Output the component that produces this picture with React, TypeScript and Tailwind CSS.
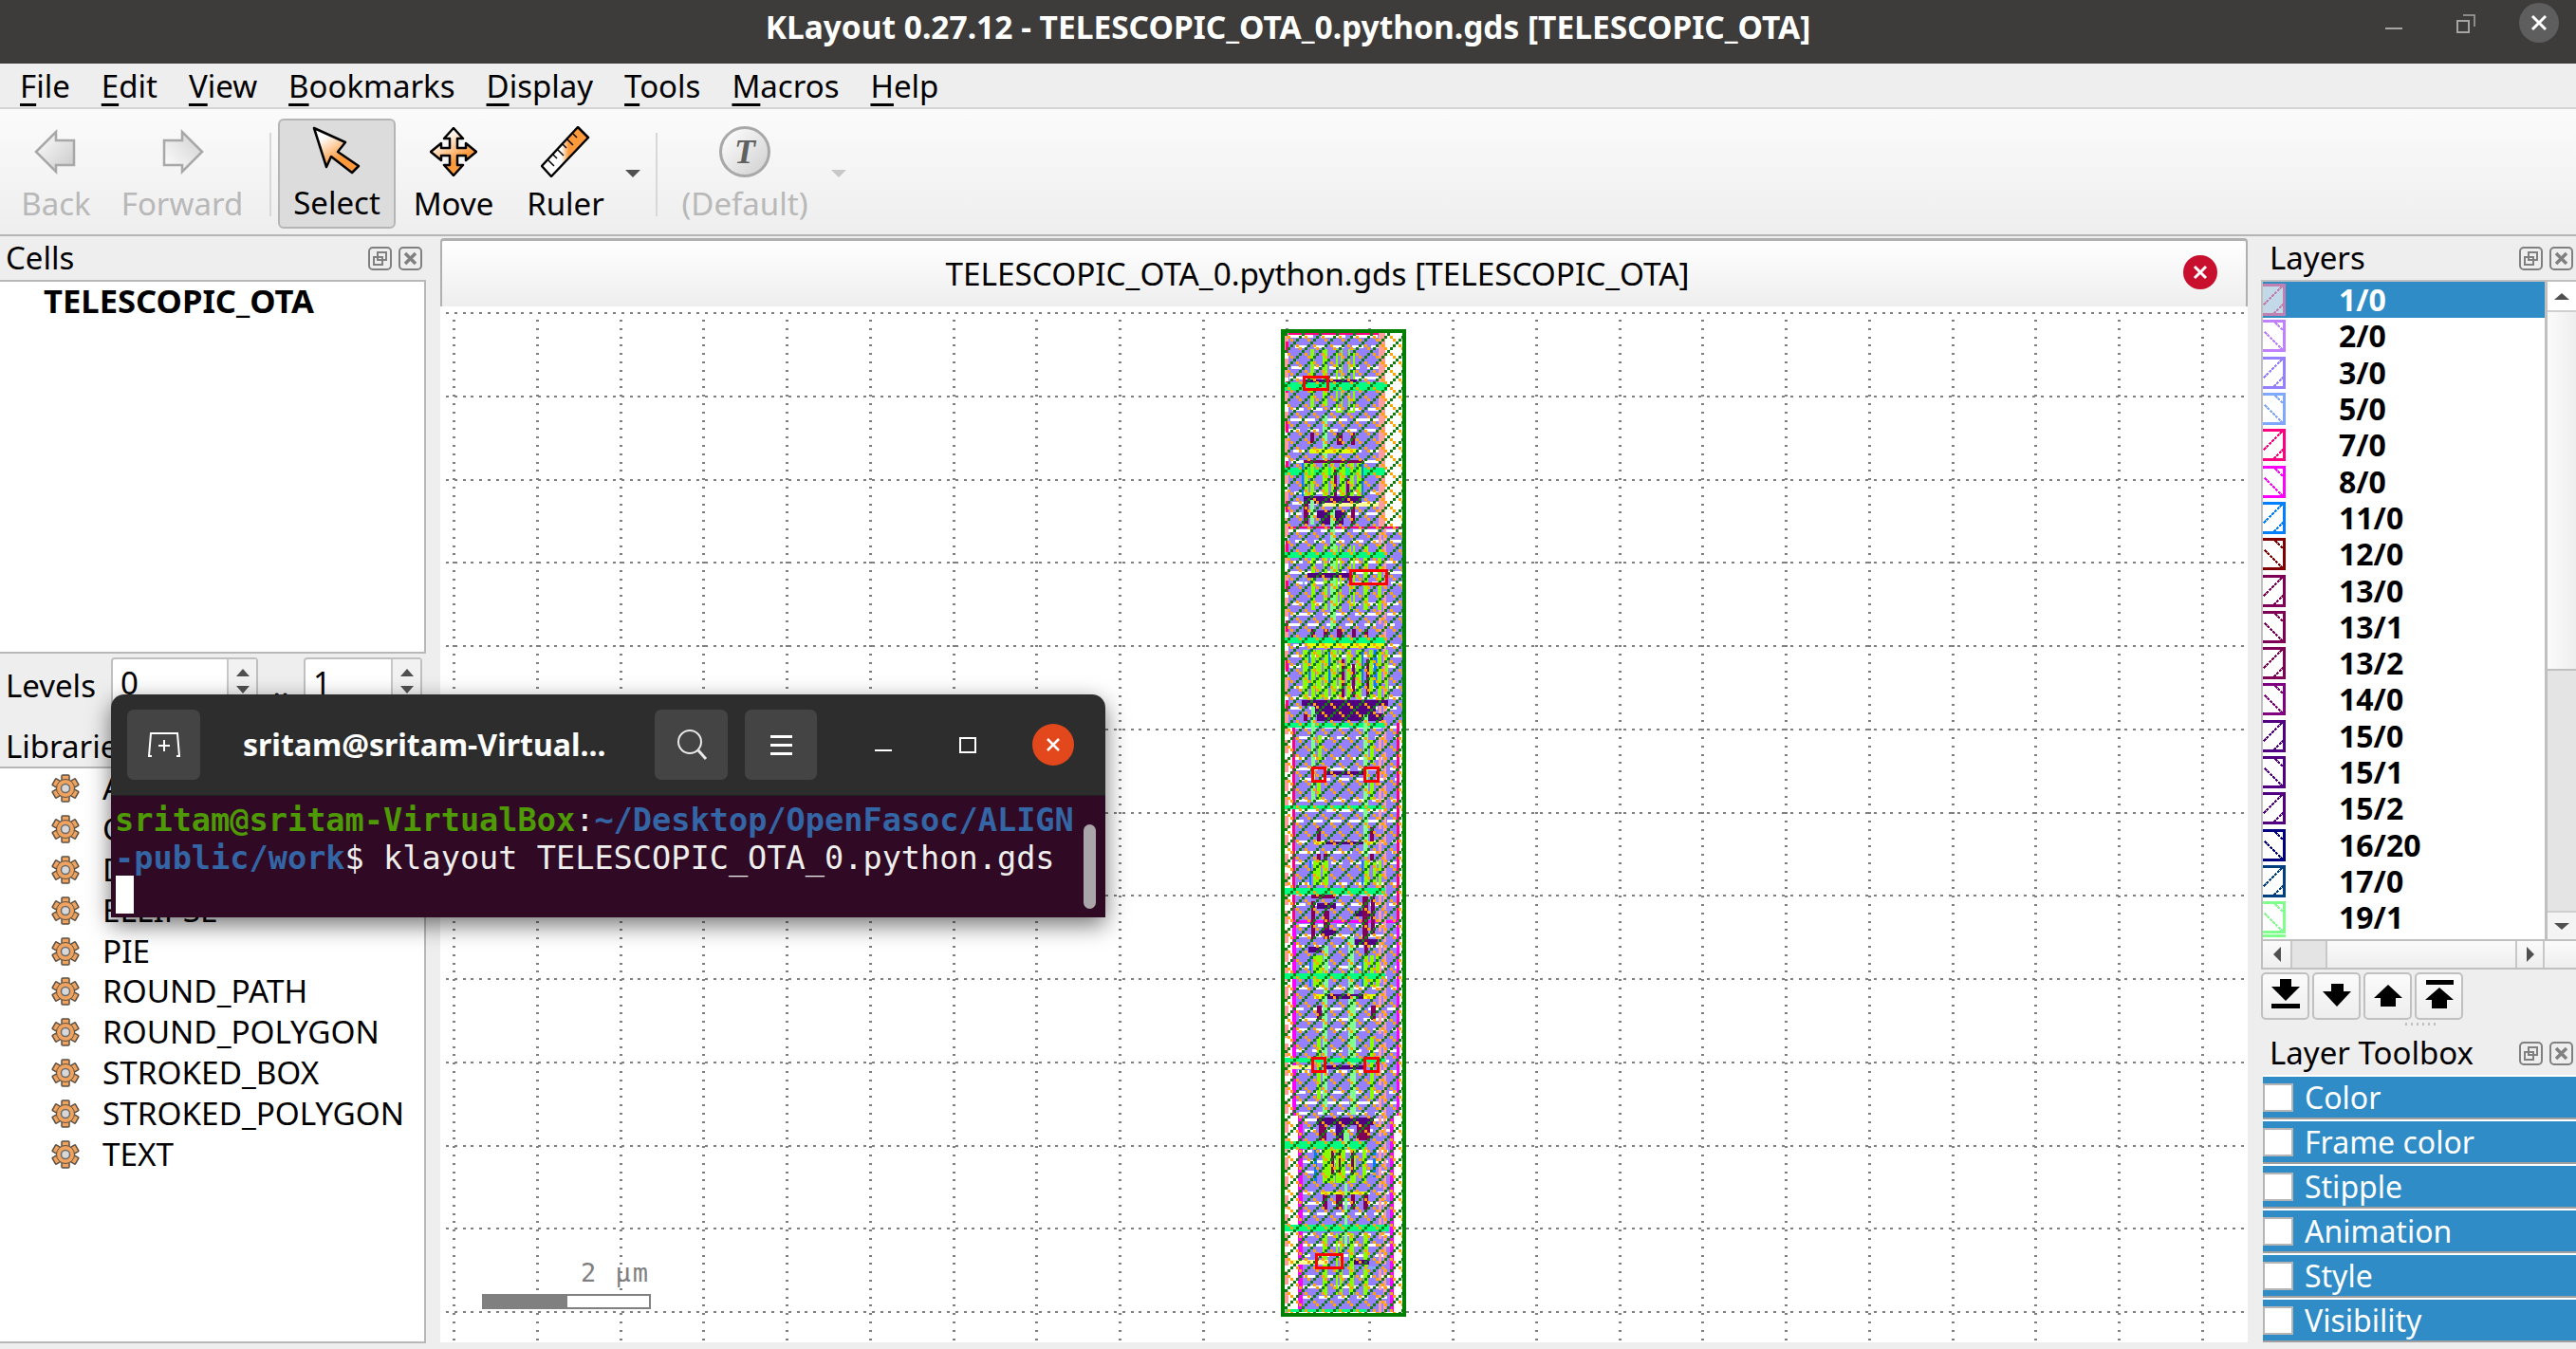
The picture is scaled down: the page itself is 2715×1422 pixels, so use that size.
const menus = [
  ["F", "ile"],
  ["E", "dit"],
  ["V", "iew"],
  ["B", "ookmarks"],
  ["D", "isplay"],
  ["T", "ools"],
  ["M", "acros"],
  ["H", "elp"],
];

const libs = ["ARC", "CIRCLE", "DONUT", "ELLIPSE", "PIE", "ROUND_PATH", "ROUND_POLYGON", "STROKED_BOX", "STROKED_POLYGON", "TEXT"];

const layers: [string, string][] = [
  ["1/0", "#c080b0"],
  ["2/0", "#c080ff"],
  ["3/0", "#9580ff"],
  ["5/0", "#80a8ff"],
  ["7/0", "#ff0080"],
  ["8/0", "#ff00ff"],
  ["11/0", "#0080ff"],
  ["12/0", "#800000"],
  ["13/0", "#800057"],
  ["13/1", "#800057"],
  ["13/2", "#800057"],
  ["14/0", "#800080"],
  ["15/0", "#500080"],
  ["15/1", "#500080"],
  ["15/2", "#500080"],
  ["16/20", "#000080"],
  ["17/0", "#004080"],
  ["19/1", "#80ff8d"],
];

const toolbox = ["Color", "Frame color", "Stipple", "Animation", "Style", "Visibility"];

// drawing colours from the klayout palette
const LIME = "#88ff00";
const MINT = "#80ff8d";
const BAR = "#00ff80";
const DP = "#500080";
const DR = "#800057";
const YEL = "#e0ff00";
const PALE = "#ffff99";
const BLUE = "#0080ff";

const shapes: [number, number, number, number, string][] = [
  // top device
  [1381, 368, 4, 62, LIME], [1394, 368, 5, 60, LIME], [1408, 368, 2, 67, LIME], [1413, 368, 2, 67, LIME], [1408, 433, 7, 2, LIME], [1421, 368, 2, 67, LIME], [1426, 368, 2, 67, LIME], [1421, 433, 7, 2, LIME],
  [1375, 400, 55, 4, DP], [1352, 403, 110, 9, BAR], [1394, 437, 5, 66, MINT],
  [1381, 456, 4, 11, DR], [1409, 456, 6, 13, DR], [1424, 456, 4, 13, DR],
  [1380, 473, 50, 5, YEL], [1374, 485, 63, 3, DR], [1352, 493, 108, 8, BAR],
  [1375, 488, 4, 35, LIME], [1381, 488, 4, 35, LIME], [1394, 488, 6, 35, LIME], [1403, 488, 3, 35, LIME], [1412, 488, 6, 35, LIME], [1423, 488, 4, 35, LIME], [1430, 488, 5, 35, LIME],
  [1372, 488, 2, 35, BLUE], [1435, 488, 2, 35, BLUE], [1406, 495, 3, 28, DR], [1419, 505, 3, 18, DR],
  [1374, 523, 61, 8, DP], [1374, 531, 5, 22, DR], [1388, 538, 30, 8, DP], [1392, 546, 24, 7, DP], [1424, 531, 4, 22, DR], [1381, 527, 4, 26, MINT], [1394, 530, 59, 4, PALE],
  [1358, 555, 122, 2, "#ff0080"],
  // second device
  [1402, 537, 5, 36, MINT],
  [1382, 575, 4, 68, LIME], [1395, 575, 4, 68, LIME], [1408, 575, 2, 68, LIME], [1412, 575, 2, 68, LIME], [1422, 575, 2, 68, LIME], [1426, 575, 2, 68, LIME], [1437, 575, 5, 68, LIME], [1452, 575, 4, 68, LIME],
  [1402, 573, 6, 90, MINT], [1353, 582, 107, 6, BAR], [1378, 604, 45, 5, DP], [1373, 604, 2, 12, "#80a8ff"],
  [1382, 663, 4, 9, DR], [1395, 663, 5, 9, DR], [1409, 663, 6, 9, DR], [1425, 663, 4, 9, DR], [1438, 663, 4, 9, DR],
  [1378, 672, 66, 5, DP], [1353, 672, 107, 6, BAR], [1378, 678, 82, 5, YEL],
  [1373, 685, 6, 52, LIME], [1382, 685, 4, 52, LIME], [1387, 685, 6, 52, LIME], [1395, 685, 5, 52, LIME], [1403, 685, 6, 52, LIME], [1411, 685, 3, 52, LIME], [1419, 685, 5, 52, LIME], [1429, 685, 6, 52, LIME], [1443, 685, 4, 52, LIME], [1452, 685, 4, 52, LIME], [1460, 685, 3, 52, LIME],
  [1379, 685, 2, 40, BLUE], [1400, 685, 2, 40, BLUE], [1435, 685, 2, 40, BLUE], [1448, 685, 3, 40, BLUE], [1414, 695, 3, 40, DR], [1425, 700, 3, 35, DR], [1440, 695, 3, 40, DR],
  [1372, 738, 91, 6, DP], [1385, 744, 65, 8, DP], [1374, 752, 4, 8, DR], [1388, 752, 70, 8, DP], [1353, 762, 107, 5, BAR],
  [1382, 745, 4, 100, MINT], [1437, 753, 5, 150, MINT], [1389, 775, 4, 30, LIME], [1444, 780, 4, 25, LIME],
  // middle devices
  [1398, 813, 39, 4, DP], [1388, 825, 4, 18, LIME], [1444, 825, 4, 18, LIME],
  [1353, 849, 107, 4, BAR], [1388, 872, 4, 15, DR], [1444, 872, 4, 15, DR], [1385, 887, 12, 3, YEL], [1397, 887, 40, 3, DP], [1440, 887, 11, 3, YEL],
  [1388, 900, 4, 7, DR], [1395, 900, 4, 7, DR], [1444, 900, 4, 7, DR],
  [1380, 907, 2, 26, BLUE], [1384, 907, 4, 26, LIME], [1388, 907, 4, 26, LIME], [1394, 907, 6, 26, LIME], [1435, 907, 2, 26, BLUE], [1438, 907, 5, 26, LIME], [1447, 907, 4, 26, LIME], [1453, 907, 3, 26, LIME],
  [1353, 936, 107, 7, BAR],
  [1382, 943, 25, 4, DR], [1382, 950, 4, 40, DR], [1388, 952, 20, 6, DP], [1395, 960, 6, 30, DR], [1428, 960, 16, 6, DP], [1436, 945, 6, 50, DR], [1445, 945, 4, 40, DR],
  [1392, 980, 16, 6, DP], [1379, 998, 14, 6, DP], [1428, 990, 24, 6, DP], [1438, 985, 4, 30, DR],
  [1380, 1007, 2, 33, BLUE], [1384, 1007, 6, 33, LIME], [1390, 1007, 4, 33, LIME], [1396, 1007, 4, 33, LIME], [1437, 1007, 5, 33, LIME], [1444, 1007, 4, 33, LIME], [1450, 1007, 4, 33, LIME], [1435, 1007, 2, 33, BLUE],
  [1395, 997, 5, 53, MINT], [1421, 988, 6, 125, MINT], [1353, 1026, 107, 6, BAR],
  [1385, 1048, 65, 5, DP], [1385, 1048, 12, 5, YEL], [1437, 1048, 13, 5, YEL],
  [1388, 1060, 5, 15, DR], [1445, 1060, 5, 15, DR],
  [1394, 1050, 5, 125, MINT], [1423, 1050, 6, 125, MINT], [1388, 1093, 4, 66, LIME], [1444, 1093, 4, 66, LIME],
  [1353, 1115, 107, 5, BAR], [1358, 1123, 24, 4, PALE], [1398, 1123, 40, 4, DP],
  // lower devices
  [1388, 1178, 60, 8, DP], [1390, 1186, 8, 16, DR], [1408, 1186, 8, 16, DP], [1430, 1186, 14, 16, DR], [1353, 1203, 87, 8, BAR], [1416, 1190, 6, 20, MINT],
  [1385, 1211, 3, 36, BLUE], [1394, 1211, 6, 36, LIME], [1400, 1211, 7, 36, LIME], [1408, 1211, 10, 36, LIME], [1423, 1211, 6, 36, LIME], [1436, 1211, 4, 36, LIME], [1447, 1211, 3, 30, BLUE],
  [1403, 1213, 3, 25, DR], [1411, 1213, 2, 25, DR], [1424, 1213, 3, 25, DR],
  [1392, 1256, 50, 3, YEL], [1394, 1259, 5, 16, DR], [1408, 1259, 7, 16, DR], [1424, 1259, 4, 16, DR], [1437, 1259, 5, 16, DR],
  [1417, 1247, 3, 66, MINT], [1353, 1291, 111, 7, BAR],
  [1394, 1300, 5, 65, LIME], [1408, 1300, 2, 65, LIME], [1412, 1300, 3, 65, LIME], [1422, 1300, 5, 65, LIME], [1437, 1300, 5, 65, LIME],
  [1358, 1328, 42, 5, PALE], [1427, 1328, 16, 5, DP], [1430, 1335, 20, 3, "#80a8ff"], [1355, 1380, 85, 3, BAR],
];

const reds: [number, number, number, number][] = [
  [1373, 396, 28, 16],
  [1422, 600, 41, 17],
  [1382, 808, 16, 17],
  [1437, 808, 17, 17],
  [1382, 1114, 16, 17],
  [1437, 1114, 17, 17],
  [1386, 1321, 30, 17],
];

// fill regions, the layer 3/0 stipple sits on top of these
const regions: [number, number, number, number][] = [
  [1358, 350, 95, 205],
  [1358, 555, 120, 207],
  [1362, 762, 113, 414],
  [1368, 1176, 100, 207],
];

function dashes() {
  let d = "";
  regions.forEach(([x, y, w, h]) => {
    for (let yy = y + 3, i = 0; yy < y + h; yy += 11, i++) {
      if (i % 4 === 2) continue;
      const len = i % 4 === 0 ? 26 : 12;
      for (let xx = x + (i * 7) % 9; xx < x + w - 4; xx += len + 8) {
        d += `M${xx} ${yy}h${Math.min(len, x + w - xx)}v3h-${Math.min(len, x + w - xx)}z`;
      }
    }
  });
  return d;
}

function hatch(dir: number, skip: number) {
  const cells = 6;
  let d = "";
  for (let y = 351; y < 1384; y += 3) {
    for (let x = 1354; x < 1478; x += 3) {
      const row = (y - 351) / 3;
      const k = ((x - 1354) / 3 + dir * row) % cells;
      const m = (k + cells) % cells;
      if (m === 0 && (skip === 0 || row % skip !== 0)) d += `M${x} ${y}h3v3h-3z`;
    }
  }
  return d;
}

function gridDots() {
  let d = "";
  for (let i = 0; i < 22; i++) {
    const x = Math.round(477 + i * 87.75);
    for (let y = 337; y < 1415; y += 8.8) d += `M${x} ${Math.round(y)}h3v2h-3z`;
  }
  for (let i = 0; i < 13; i++) {
    const y = Math.round(329 + i * 87.75);
    for (let x = 470; x < 2368; x += 8.8) d += `M${Math.round(x)} ${y}h3v2h-3z`;
  }
  return d;
}

function LayoutCanvas() {
  return (
    <svg viewBox="464 323 1905 1092" width={1905} height={1092} className="block" shapeRendering="crispEdges">
      <path d={gridDots()} fill="#808080" />
      <rect x={1350} y={347} width={132} height={1041} fill="#ffffff" />
      {regions.map(([x, y, w, h], i) => (
        <rect key={i} x={x} y={y} width={w} height={h} fill="#9580ff" />
      ))}
      <path d={dashes()} fill="#ffffff" />
      <rect x={1358} y={350} width={95} height={3} fill="#ff0080" />
      <rect x={1362} y={762} width={3} height={208} fill="#ff0080" />
      <rect x={1472} y={762} width={3} height={208} fill="#ff0080" />
      <rect x={1362} y={970} width={4} height={206} fill="#ff00ff" />
      <rect x={1472} y={970} width={3} height={206} fill="#ff00ff" />
      <rect x={1362} y={970} width={113} height={3} fill="#ff00ff" />
      <rect x={1368} y={1176} width={5} height={207} fill="#ff00ff" />
      <rect x={1465} y={1176} width={4} height={207} fill="#ff00ff" />
      <rect x={1453} y={350} width={7} height={205} fill="#ff9d9d" />
      <line x1={1454} y1={555} x2={1454} y2={1384} stroke="#ff9d9d" strokeWidth={3} strokeDasharray="22 5" />
      <line x1={1459} y1={555} x2={1459} y2={1384} stroke="#ff9d9d" strokeWidth={3} strokeDasharray="30 4" />
      <line x1={1355} y1={350} x2={1355} y2={760} stroke="#ff9d9d" strokeWidth={5} strokeDasharray="20 8" />
      <line x1={1356} y1={360} x2={1356} y2={760} stroke="#ff0080" strokeWidth={3} strokeDasharray="12 30" />
      <line x1={1355} y1={760} x2={1355} y2={1384} stroke="#ff9d9d" strokeWidth={5} strokeDasharray="14 6" />
      {shapes.map(([x, y, w, h, c], i) => (
        <rect key={i} x={x} y={y} width={w} height={h} fill={c} />
      ))}
      <path d={hatch(-1, 3)} fill="#ffa500" />
      <path d={hatch(1, 0)} fill="#0e7d0e" />
      {reds.map(([x, y, w, h], i) => (
        <rect key={i} x={x + 1.5} y={y + 1.5} width={w - 3} height={h - 3} fill="none" stroke="#ff0000" strokeWidth={3} />
      ))}
      <rect x={1352} y={349} width={128} height={1037} fill="none" stroke="#008000" strokeWidth={4} />

      {/* scale bar */}
      <rect x={508} y={1364} width={178} height={16} fill="#808080" />
      <rect x={598} y={1366} width={86} height={12} fill="#ffffff" />
      <text x={612} y={1351} fill="#808080" fontFamily="DejaVu Sans Mono, monospace" fontSize={27} letterSpacing={2}>
        2 µm
      </text>
    </svg>
  );
}

function DockBtns() {
  return (
    <div className="flex gap-[7px]">
      <svg width={25} height={25} viewBox="0 0 25 25" fill="none" stroke="#808080" strokeWidth={2}>
        <rect x={1} y={1} width={23} height={23} rx={4} />
        <rect x={10} y={6} width={9} height={8} />
        <rect x={6} y={11} width={9} height={8} />
      </svg>
      <svg width={25} height={25} viewBox="0 0 25 25" fill="none" stroke="#808080" strokeWidth={2}>
        <rect x={1} y={1} width={23} height={23} rx={4} />
        <path d="M7 7l11 11M18 7L7 18" strokeWidth={3.5} />
      </svg>
    </div>
  );
}

function Gear() {
  return (
    <svg width={30} height={30} viewBox="0 0 30 30" className="shrink-0">
      {[0, 60, 120, 180, 240, 300].map((a) => (
        <rect key={a} x={11} y={1} width={8} height={8} rx={1} fill="#f0a35e" stroke="#5a5045" strokeWidth={1.5} transform={`rotate(${a} 15 15)`} />
      ))}
      <circle cx={15} cy={15} r={9.5} fill="#f0a35e" stroke="#5a5045" strokeWidth={1} />
      <circle cx={15} cy={15} r={4.5} fill="#d8d8d8" stroke="#6a6a6a" strokeWidth={1.5} />
    </svg>
  );
}

function BackIcon({ flip }: { flip?: boolean }) {
  const id = flip ? "navF" : "navB";
  return (
    <svg width={48} height={48} viewBox="0 0 48 48" className={flip ? "-scale-x-100" : ""}>
      <defs>
        <linearGradient id={id} x1="0" y1="0" x2="1" y2="1">
          <stop offset="0" stopColor={flip ? "#cfcfcf" : "#ffffff"} />
          <stop offset="1" stopColor={flip ? "#ffffff" : "#c8c8c8"} />
        </linearGradient>
      </defs>
      <path d="M3 24L24 3v9h19v26H24v7z" fill={`url(#${id})`} stroke="#a8a8a8" strokeWidth={2.5} />
    </svg>
  );
}

function OrangeGrad({ id }: { id: string }) {
  return (
    <defs>
      <linearGradient id={id} x1="0" y1="0" x2="0.6" y2="1">
        <stop offset="0.25" stopColor="#ffffff" />
        <stop offset="0.75" stopColor="#ff9a3c" />
      </linearGradient>
    </defs>
  );
}

function ToolCol({ w, label, disabled, children }: { w: string; label: string; disabled?: boolean; children: React.ReactNode }) {
  return (
    <div className={`flex flex-col items-center shrink-0 ${w}`}>
      <div className="h-[64px] flex items-center justify-center mt-[13px]">{children}</div>
      <div className={`text-[33px] leading-[40px] mt-[3px] ${disabled ? "text-[#b8b8b8]" : "text-black"}`}>{label}</div>
    </div>
  );
}

function Swatch({ color, i, sel }: { color: string; i: number; sel?: boolean }) {
  const slash = i % 2 === 0;
  return (
    <svg width={24} height={34} viewBox="0 0 24 34" className="shrink-0" shapeRendering="crispEdges">
      {sel && <rect x={0} y={0} width={24} height={34} fill="#c3d9e8" />}
      <path d="M0 1.5H22.5V32.5H0" fill="none" stroke={color} strokeWidth={3} />
      {slash ? (
        <path d="M20 3L0 23M22 21L11 32" fill="none" stroke={color} strokeWidth={2} strokeDasharray="3 1" />
      ) : (
        <path d="M13 3L22 12M2 13L21 32" fill="none" stroke={color} strokeWidth={2} strokeDasharray="3 1" />
      )}
    </svg>
  );
}

function MoveBtn({ children }: { children: React.ReactNode }) {
  return (
    <div className="w-[51px] h-[50px] rounded-[5px] border-2 border-[#c0c0c0] bg-gradient-to-b from-[#fbfbfb] to-[#eeeeee] flex items-center justify-center">
      {children}
    </div>
  );
}

function Terminal() {
  return (
    <div className="absolute left-[117px] top-[732px] w-[1048px] h-[235px] rounded-t-[14px] overflow-hidden shadow-[0_8px_24px_rgba(0,0,0,0.55)] flex flex-col">
      <div className="h-[107px] bg-[#2d2d2d] border-b border-[#1f1f1f] relative flex items-center pl-[17px]">
        <div className="w-[77px] h-[74px] bg-[#444444] rounded-[7px] flex items-center justify-center">
          <svg width={36} height={26} viewBox="0 0 36 26" fill="none" stroke="#ffffff" strokeWidth={2}>
            <path d="M2 25L4 1H32L34 25M1 25h4M31 25h4M18 8v12M12 14h12" />
          </svg>
        </div>
        <div className="ml-[45px] w-[434px] text-[32px] font-bold text-white whitespace-nowrap">sritam@sritam-Virtual...</div>
        <div className="w-[77px] h-[74px] bg-[#444444] rounded-[7px] flex items-center justify-center">
          <svg width={34} height={34} viewBox="0 0 34 34" fill="none" stroke="#e8e8e8" strokeWidth={2}>
            <circle cx={15} cy={14} r={12} />
            <path d="M24 23l8 9" strokeWidth={3} />
          </svg>
        </div>
        <div className="ml-[18px] w-[76px] h-[74px] bg-[#444444] rounded-[7px] flex items-center justify-center">
          <div className="w-[23px] flex flex-col gap-[6px]">
            <div className="h-[3px] bg-white" />
            <div className="h-[3px] bg-white" />
            <div className="h-[3px] bg-white" />
          </div>
        </div>
        <div className="ml-[61px] w-[18px] h-[2px] bg-white mt-[11px]" />
        <div className="ml-[71px] w-[18px] h-[17px] border-2 border-white" />
        <div className="ml-[59px] w-[44px] h-[44px] rounded-full bg-[#e2481c] flex items-center justify-center">
          <svg width={18} height={18} viewBox="0 0 18 18" stroke="#ffffff" strokeWidth={2.5}>
            <path d="M3 3l12 12M15 3L3 15" />
          </svg>
        </div>
      </div>
      <div className="flex-1 bg-[#300a24] relative pt-[6px] pl-[4px] font-['DejaVu_Sans_Mono',monospace] text-[33.6px] leading-[40px] whitespace-pre text-[#eeeeec]">
        <div>
          <span className="font-bold text-[#4e9a06]">sritam@sritam-VirtualBox</span>:<span className="font-bold text-[#3465a4]">~/Desktop/OpenFasoc/ALIGN</span>
        </div>
        <div>
          <span className="font-bold text-[#3465a4]">-public/work</span>$ klayout TELESCOPIC_OTA_0.python.gds
        </div>
        <div className="w-[19px] h-[40px] bg-white -mt-[2px] ml-[1px]" />
        <div className="absolute right-[10px] top-[30px] w-[13px] h-[89px] rounded-full bg-[#a9a5a8]" />
      </div>
    </div>
  );
}

export default function App() {
  return (
    <div className="relative w-[2715px] h-[1422px] overflow-hidden bg-[#eeeeee] flex flex-col font-['Noto_Sans',sans-serif] text-black">
      {/* title bar */}
      <div className="h-[67px] shrink-0 bg-[#3d3c3a] relative flex items-center justify-center">
        <div className="text-[33.5px] font-bold text-white -mt-[11px]">KLayout 0.27.12 - TELESCOPIC_OTA_0.python.gds [TELESCOPIC_OTA]</div>
        <div className="absolute left-[2514px] top-[29px] w-[18px] h-[2px] bg-[#a5a5a5]" />
        <svg width={20} height={20} viewBox="0 0 20 20" fill="none" stroke="#a5a5a5" strokeWidth={2} className="absolute left-[2589px] top-[15px]">
          <rect x={1} y={7} width={12} height={12} />
          <path d="M7 1h12v12" strokeWidth={1.5} />
        </svg>
        <div className="absolute left-[2655px] top-[3px] w-[42px] h-[42px] rounded-full bg-[#5e5e5e] flex items-center justify-center">
          <svg width={18} height={18} viewBox="0 0 18 18" stroke="#ffffff" strokeWidth={3}>
            <path d="M2 2l14 14M16 2L2 16" />
          </svg>
        </div>
      </div>

      {/* menu bar */}
      <div className="h-[48px] shrink-0 bg-[#eeeeee] border-b-2 border-[#d4d4d4] flex items-center gap-[33px] pl-[21px] pt-[2px] text-[33px]">
        {menus.map(([a, b]) => (
          <div key={a} className="whitespace-nowrap">
            <span className="underline decoration-[3px] underline-offset-[6px]">{a}</span>
            {b}
          </div>
        ))}
      </div>

      {/* toolbar */}
      <div className="h-[134px] shrink-0 bg-gradient-to-b from-[#fbfbfb] to-[#eeeeee] border-b-2 border-[#b5b5b5] flex">
        <ToolCol w="w-[118px]" label="Back" disabled>
          <BackIcon />
        </ToolCol>
        <ToolCol w="w-[148px]" label="Forward" disabled>
          <BackIcon flip />
        </ToolCol>
        <div className="ml-[18px] mt-[25px] w-[2px] h-[88px] bg-[#d8d8d8]" />
        <div className="ml-[7px] mt-[10px] w-[124px] h-[116px] shrink-0 rounded-[6px] border-2 border-[#b5b5b5] bg-[#dcdcdc] flex flex-col items-center">
          <svg width={52} height={54} viewBox="0 0 52 54" className="mt-[5px]">
            <OrangeGrad id="selG" />
            <path d="M2 3L35 18L27 28L49 43L42 50L20 33L15 44z" fill="url(#selG)" stroke="#000000" strokeWidth={2.5} strokeLinejoin="round" />
          </svg>
          <div className="text-[33px] leading-[40px] mt-[8px]">Select</div>
        </div>
        <ToolCol w="w-[122px]" label="Move">
          <svg width={50} height={52} viewBox="0 0 50 52">
            <OrangeGrad id="movG" />
            <path d="M1 26L12 17V22H21V12H15L25 1L35 12H29V22H38V17L49 26L38 35V30H29V40H35L25 51L15 40H21V30H12V35z" fill="url(#movG)" stroke="#000000" strokeWidth={2.5} strokeLinejoin="round" />
          </svg>
        </ToolCol>
        <ToolCol w="w-[114px]" label="Ruler">
          <svg width={52} height={54} viewBox="0 0 52 54">
            <defs>
              <linearGradient id="rulG" x1="0" y1="0" x2="1" y2="0">
                <stop offset="0.42" stopColor="#ffffff" />
                <stop offset="0.58" stopColor="#ff9a3c" />
              </linearGradient>
            </defs>
            <path d="M39 1L50 12L11 53L1 42z" fill="url(#rulG)" stroke="#000000" strokeWidth={2.5} strokeLinejoin="round" />
            <path d="M34 8l4 4M28 14l6 6M23 19l4 4M18 25l6 6M13 30l4 4M8 36l6 6" stroke="#000000" strokeWidth={1.5} />
          </svg>
        </ToolCol>
        <div className="w-[28px] flex justify-center pt-[64px]">
          <div className="w-0 h-0 border-x-[8px] border-x-transparent border-t-[8px] border-t-[#505050]" />
        </div>
        <div className="ml-[10px] mt-[25px] w-[2px] h-[88px] bg-[#d8d8d8]" />
        <ToolCol w="w-[184px]" label="(Default)" disabled>
          <div className="w-[54px] h-[54px] rounded-full border-[3px] border-[#a8a8a8] bg-gradient-to-br from-white to-[#d0d0d0] flex items-center justify-center font-['Liberation_Serif',serif] italic font-bold text-[36px] text-[#606060]">
            T
          </div>
        </ToolCol>
        <div className="w-[14px] flex justify-center pt-[64px]">
          <div className="w-0 h-0 shrink-0 border-x-[8px] border-x-transparent border-t-[8px] border-t-[#c8c8c8]" />
        </div>
      </div>

      {/* body */}
      <div className="flex-1 flex min-h-0">
        {/* left docks */}
        <div className="w-[449px] shrink-0 flex flex-col">
          <div className="h-[46px] flex items-center justify-between pl-[6px] pr-[4px] text-[33px] shrink-0">
            <span>Cells</span>
            <DockBtns />
          </div>
          <div className="h-[394px] shrink-0 bg-white border-y-2 border-r-2 border-[#b8b8b8] pl-[46px] text-[34.6px] font-bold leading-[40px]">TELESCOPIC_OTA</div>
          <div className="h-[79px] shrink-0 flex items-start pl-[6px] text-[33px]">
            <span className="mt-[9px] w-[111px]">Levels</span>
            <div className="mt-[4px] w-[155px] h-[56px] border-2 border-[#c0c0c0] rounded-[4px] bg-white flex justify-between">
              <span className="pl-[8px] leading-[50px]">0</span>
              <div className="w-[31px] bg-[#f2f2f2] border-l-2 border-[#c8c8c8] flex flex-col items-center pt-[10px] gap-[10px]">
                <div className="w-0 h-0 border-x-[7px] border-x-transparent border-b-[8px] border-b-[#505050]" />
                <div className="w-0 h-0 border-x-[7px] border-x-transparent border-t-[8px] border-t-[#505050]" />
              </div>
            </div>
            <span className="w-[48px] text-center mt-[9px]">..</span>
            <div className="mt-[4px] w-[125px] h-[56px] border-2 border-[#c0c0c0] rounded-[4px] bg-white flex justify-between">
              <span className="pl-[8px] leading-[50px]">1</span>
              <div className="w-[31px] bg-[#f2f2f2] border-l-2 border-[#c8c8c8] flex flex-col items-center pt-[10px] gap-[10px]">
                <div className="w-0 h-0 border-x-[7px] border-x-transparent border-b-[8px] border-b-[#505050]" />
                <div className="w-0 h-0 border-x-[7px] border-x-transparent border-t-[8px] border-t-[#505050]" />
              </div>
            </div>
          </div>
          <div className="h-[40px] shrink-0 pl-[6px] text-[33px] leading-[38px]">Libraries</div>
          <div className="h-[608px] shrink-0 bg-white border-y-2 border-r-2 border-[#b8b8b8]">
            {libs.map((l) => (
              <div key={l} className="h-[42.8px] flex items-center pl-[54px] gap-[24px] text-[33.3px] whitespace-nowrap">
                <Gear />
                <span>{l}</span>
              </div>
            ))}
          </div>
        </div>

        {/* center view */}
        <div className="ml-[15px] w-[1905px] shrink-0 flex flex-col">
          <div className="mt-[2px] h-[72px] shrink-0 rounded-t-[4px] border-t-[3px] border-x-2 border-[#b0b0b0] bg-gradient-to-b from-white to-[#eeeeee] relative flex items-center justify-center text-[33.3px]">
            <span className="mr-[56px]">TELESCOPIC_OTA_0.python.gds [TELESCOPIC_OTA]</span>
            <div className="absolute right-[30px] top-[15px] w-[36px] h-[36px] rounded-full bg-[#c8102e] flex items-center justify-center">
              <svg width={16} height={16} viewBox="0 0 16 16" stroke="#ffffff" strokeWidth={3}>
                <path d="M2 2l12 12M14 2L2 14" />
              </svg>
            </div>
          </div>
          <div className="h-[1092px] shrink-0 bg-white">
            <LayoutCanvas />
          </div>
        </div>

        {/* right docks */}
        <div className="ml-[14px] w-[332px] shrink-0 flex flex-col">
          <div className="h-[46px] shrink-0 flex items-center justify-between pl-[9px] pr-[3px] text-[33px]">
            <span>Layers</span>
            <DockBtns />
          </div>
          <div className="h-[727px] shrink-0 border-2 border-r-0 border-[#c0c0c0] flex flex-col">
            <div className="h-[693px] shrink-0 flex overflow-hidden">
              <div className="w-[297px] shrink-0 bg-white overflow-hidden">
                {layers.map(([name, color], i) => (
                  <div key={name} className={`h-[38.3px] flex items-center text-[32px] leading-[38px] font-bold ${i === 0 ? "bg-[#308cc6] text-white" : ""}`}>
                    <Swatch color={color} i={i} sel={i === 0} />
                    <span className="ml-[56px]">{name}</span>
                  </div>
                ))}
                <div className="h-[3px] w-[24px] bg-[#80ff8d] -mt-[1px]" />
              </div>
              <div className="flex-1 border-l-[3px] border-[#c0c0c0] flex flex-col">
                <div className="h-[32px] shrink-0 bg-white border-b-2 border-[#d0d0d0] flex items-center justify-center">
                  <div className="w-0 h-0 border-x-[8px] border-x-transparent border-b-[7px] border-b-[#505050]" />
                </div>
                <div className="h-[378px] shrink-0 bg-gradient-to-r from-[#fbfbfb] to-[#eeeeee] border-b-2 border-[#c0c0c0]" />
                <div className="flex-1 bg-[#e4e4e4]" />
                <div className="h-[30px] shrink-0 bg-[#f4f4f4] border-t-2 border-[#d0d0d0] flex items-center justify-center">
                  <div className="w-0 h-0 border-x-[8px] border-x-transparent border-t-[7px] border-t-[#505050]" />
                </div>
              </div>
            </div>
            <div className="flex-1 border-t-2 border-[#c0c0c0] flex bg-gradient-to-b from-[#fbfbfb] to-[#eeeeee]">
              <div className="w-[31px] border-r-2 border-[#c8c8c8] flex items-center justify-center">
                <div className="w-0 h-0 border-y-[8px] border-y-transparent border-r-[8px] border-r-[#505050]" />
              </div>
              <div className="w-[37px] bg-[#e4e4e4] border-r-2 border-[#c8c8c8]" />
              <div className="w-[198px]" />
              <div className="w-[31px] border-x-2 border-[#c8c8c8] flex items-center justify-center">
                <div className="w-0 h-0 border-y-[8px] border-y-transparent border-l-[8px] border-l-[#505050]" />
              </div>
            </div>
          </div>
          <div className="mt-[3px] h-[50px] shrink-0 flex gap-[3px]">
            <MoveBtn>
              <svg width={32} height={36} viewBox="0 0 32 36"><path d="M10 0H22V8H31L16 23L1 8H10zM1 26H31V31H1z" /></svg>
            </MoveBtn>
            <MoveBtn>
              <svg width={32} height={26} viewBox="0 0 32 26"><path d="M10 0H23V8H31L16 24L1 8H10z" /></svg>
            </MoveBtn>
            <MoveBtn>
              <svg width={32} height={26} viewBox="0 0 32 26"><path d="M16 1L31 15H24V24H8V15H1z" /></svg>
            </MoveBtn>
            <MoveBtn>
              <svg width={32} height={34} viewBox="0 0 32 34"><path d="M2 0H31V5H2zM16 8L31 21H24V30H8V21H1z" /></svg>
            </MoveBtn>
          </div>
          <div className="h-[6px] shrink-0 mt-[3px] flex justify-center pl-[4px] gap-[4px]">
            {[0, 1, 2, 3, 4, 5].map((i) => (
              <div key={i} className="w-[2px] h-[3px] bg-[#c0c0c0]" />
            ))}
          </div>
          <div className="h-[49px] shrink-0 flex items-center justify-between pl-[9px] pr-[3px] text-[33px] pt-[3px]">
            <span>Layer Toolbox</span>
            <DockBtns />
          </div>
          <div className="flex flex-col pl-[2px]">
            {toolbox.map((t) => (
              <div key={t} className="h-[47px] shrink-0 bg-[#308cc6] border-t-[2px] border-white border-b-2 border-b-[#a0a0a0] flex items-center text-[32px] text-white">
                <div className="w-[32px] h-[30px] bg-white border-2 border-[#b5b5b5] shrink-0" />
                <span className="ml-[12px]">{t}</span>
              </div>
            ))}
          </div>
        </div>
      </div>

      <Terminal />
    </div>
  );
}
